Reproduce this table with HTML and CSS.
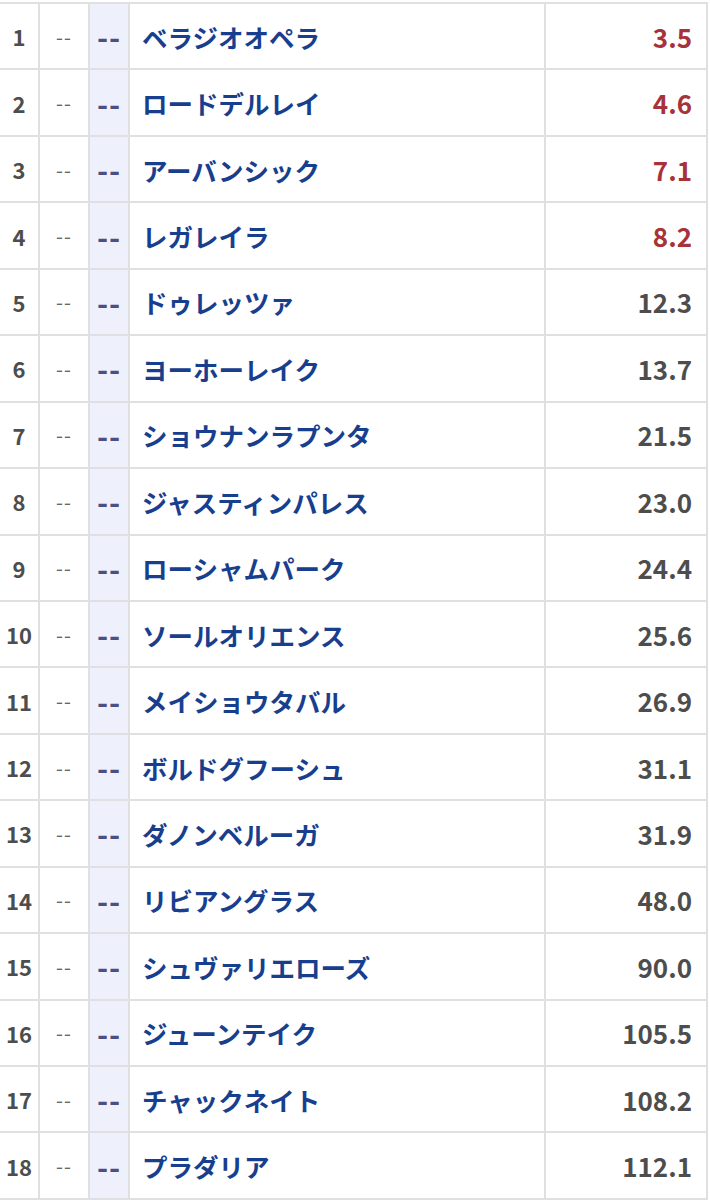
FILE: index.html
```html
<!DOCTYPE html>
<html>
  <head>
    <meta charset="utf-8">
    <title>Odds</title>
    <link rel="stylesheet" href="styles.css">
  </head>
  <body>
    <div class="odds">
      <div class="row"><div class="num">1</div><div class="mark">--</div><div class="mark2">--</div><div class="name">ベラジオオペラ</div><div class="odd hot">3.5</div></div>
      <div class="row"><div class="num">2</div><div class="mark">--</div><div class="mark2">--</div><div class="name">ロードデルレイ</div><div class="odd hot">4.6</div></div>
      <div class="row"><div class="num">3</div><div class="mark">--</div><div class="mark2">--</div><div class="name">アーバンシック</div><div class="odd hot">7.1</div></div>
      <div class="row"><div class="num">4</div><div class="mark">--</div><div class="mark2">--</div><div class="name">レガレイラ</div><div class="odd hot">8.2</div></div>
      <div class="row"><div class="num">5</div><div class="mark">--</div><div class="mark2">--</div><div class="name">ドゥレッツァ</div><div class="odd">12.3</div></div>
      <div class="row"><div class="num">6</div><div class="mark">--</div><div class="mark2">--</div><div class="name">ヨーホーレイク</div><div class="odd">13.7</div></div>
      <div class="row"><div class="num">7</div><div class="mark">--</div><div class="mark2">--</div><div class="name">ショウナンラプンタ</div><div class="odd">21.5</div></div>
      <div class="row"><div class="num">8</div><div class="mark">--</div><div class="mark2">--</div><div class="name">ジャスティンパレス</div><div class="odd">23.0</div></div>
      <div class="row"><div class="num">9</div><div class="mark">--</div><div class="mark2">--</div><div class="name">ローシャムパーク</div><div class="odd">24.4</div></div>
      <div class="row"><div class="num">10</div><div class="mark">--</div><div class="mark2">--</div><div class="name">ソールオリエンス</div><div class="odd">25.6</div></div>
      <div class="row"><div class="num">11</div><div class="mark">--</div><div class="mark2">--</div><div class="name">メイショウタバル</div><div class="odd">26.9</div></div>
      <div class="row"><div class="num">12</div><div class="mark">--</div><div class="mark2">--</div><div class="name">ボルドグフーシュ</div><div class="odd">31.1</div></div>
      <div class="row"><div class="num">13</div><div class="mark">--</div><div class="mark2">--</div><div class="name">ダノンベルーガ</div><div class="odd">31.9</div></div>
      <div class="row"><div class="num">14</div><div class="mark">--</div><div class="mark2">--</div><div class="name">リビアングラス</div><div class="odd">48.0</div></div>
      <div class="row"><div class="num">15</div><div class="mark">--</div><div class="mark2">--</div><div class="name">シュヴァリエローズ</div><div class="odd">90.0</div></div>
      <div class="row"><div class="num">16</div><div class="mark">--</div><div class="mark2">--</div><div class="name">ジューンテイク</div><div class="odd">105.5</div></div>
      <div class="row"><div class="num">17</div><div class="mark">--</div><div class="mark2">--</div><div class="name">チャックネイト</div><div class="odd">108.2</div></div>
      <div class="row"><div class="num">18</div><div class="mark">--</div><div class="mark2">--</div><div class="name">プラダリア</div><div class="odd">112.1</div></div>
    </div>
  </body>
</html>
```

FILE: styles.css
```css
html, body {
  margin: 0;
  padding: 0;
  background: #fff;
  font-family: "Noto Sans CJK JP", sans-serif;
}

.odds {
  margin-top: 2px;
  width: 708px;
  border-top: 2px solid #e0e0e0;
  border-right: 2px solid #e0e0e0;
  box-sizing: border-box;
}

.row {
  display: grid;
  grid-template-columns: 40px 50px 40px 416px 1fr;
  height: 66.44px;
  box-sizing: border-box;
  border-bottom: 2px solid #e0e0e0;
}

.row > div {
  display: flex;
  align-items: center;
  box-sizing: border-box;
}

.num {
  justify-content: center;
  font-size: 22px;
  font-weight: 700;
  color: #4d4d4d;
  border-right: 2px solid #e0e0e0;
}

.mark {
  justify-content: center;
  font-size: 20px;
  letter-spacing: 1px;
  color: #666;
  border-right: 2px solid #e0e0e0;
}

.mark2 {
  justify-content: center;
  background: #eef1fb;
  font-size: 30px;
  font-weight: 700;
  letter-spacing: 1px;
  color: #4b5080;
  border-right: 2px solid #e0e0e0;
}

.name {
  padding-left: 12px;
  font-size: 25.5px;
  font-weight: 700;
  color: #183e8e;
  border-right: 2px solid #e0e0e0;
}

.odd {
  justify-content: flex-end;
  padding-right: 14px;
  font-size: 26px;
  font-weight: 700;
  color: #4d4d4d;
}

.odd.hot {
  color: #a8323a;
}
```
